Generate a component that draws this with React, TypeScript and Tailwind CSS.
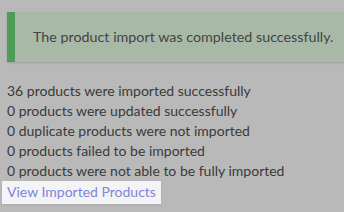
import React from 'react';

const results: string[] = [
  '36 products were imported successfully',
  '0 products were updated successfully',
  '0 duplicate products were not imported',
  '0 products failed to be imported',
  '0 products were not able to be fully imported',
];

export default function App() {
  return (
    <div className="h-[212px] w-[344px] overflow-hidden bg-[#b9b9b9] font-['Lato',sans-serif] text-[#3a3a3a]">
      <div className="pl-[7px] pt-[12px]">
        {/* success notice */}
        <div className="flex h-[50px] w-[360px] items-center border-l-[8px] border-[#4b9d57] bg-[#a9b9a8] pl-[18px] text-[14.3px] text-[#444] shadow-[0_1px_2px_rgba(0,0,0,0.15)]">
          The product import was completed successfully.
        </div>
      </div>
      <div className="mt-[19px] pl-[7px] text-[14px] leading-[20px]">
        {results.map((line, i) => (
          <div key={i}>{line}</div>
        ))}
        <a
          href="#"
          className="-ml-[5px] inline-block bg-[#f4f4f7] px-[5px] pt-[1px] pb-[2px] text-[#7c86da] shadow-[0_1px_2px_rgba(0,0,0,0.08)]"
        >
          View Imported Products
        </a>
      </div>
    </div>
  );
}
